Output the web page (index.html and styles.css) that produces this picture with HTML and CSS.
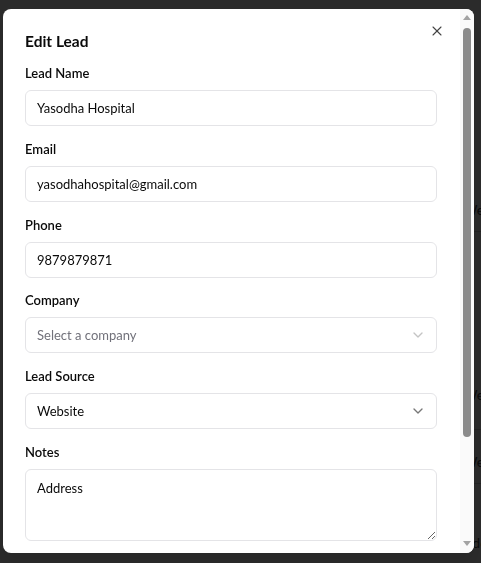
FILE: index.html
```html
<!DOCTYPE html>
<html lang="en">
<head>
<meta charset="utf-8">
<title>Edit Lead</title>
<link rel="stylesheet" href="styles.css">
</head>
<body>
  <div class="page">
    <div class="bg-table">
      <div class="bg-row r1"><span>Website</span></div>
      <div class="bg-row r2"><span>Website</span></div>
      <div class="bg-row r3"><span>Website</span></div>
      <div class="bg-row r4"><span>Added</span></div>
    </div>
    <p class="bg-foot">For more information, visit www.cuvama.co.in</p>
  </div>
  <div class="overlay"></div>

  <div class="modal" role="dialog" aria-labelledby="dlg-title">
    <div class="modal-body">
      <button class="close" type="button" aria-label="Close">
        <svg width="16" height="16" viewBox="0 0 24 24" fill="none" stroke="currentColor" stroke-width="2" stroke-linecap="round" stroke-linejoin="round"><path d="M18 6 6 18"/><path d="m6 6 12 12"/></svg>
      </button>
      <h2 class="title" id="dlg-title">Edit Lead</h2>
      <form class="form">
        <div class="field">
          <label class="label" for="f-name">Lead Name</label>
          <input class="input" id="f-name" type="text" value="Yasodha Hospital">
        </div>
        <div class="field">
          <label class="label" for="f-email">Email</label>
          <input class="input" id="f-email" type="text" value="yasodhahospital@gmail.com">
        </div>
        <div class="field">
          <label class="label" for="f-phone">Phone</label>
          <input class="input" id="f-phone" type="text" value="9879879871">
        </div>
        <div class="field">
          <label class="label">Company</label>
          <button class="select is-placeholder" type="button">
            <span>Select a company</span>
            <svg class="chev" width="16" height="16" viewBox="0 0 24 24" fill="none" stroke="currentColor" stroke-width="2" stroke-linecap="round" stroke-linejoin="round"><path d="m6 9 6 6 6-6"/></svg>
          </button>
        </div>
        <div class="field">
          <label class="label">Lead Source</label>
          <button class="select" type="button">
            <span>Website</span>
            <svg class="chev" width="16" height="16" viewBox="0 0 24 24" fill="none" stroke="currentColor" stroke-width="2" stroke-linecap="round" stroke-linejoin="round"><path d="m6 9 6 6 6-6"/></svg>
          </button>
        </div>
        <div class="field">
          <label class="label" for="f-notes">Notes</label>
          <textarea class="textarea" id="f-notes">Address</textarea>
        </div>
      </form>
    </div>
    <div class="scrollbar" aria-hidden="true">
      <span class="sb-btn"><span class="sb-arrow up"></span></span>
      <span class="sb-track"><span class="sb-thumb"></span></span>
      <span class="sb-btn"><span class="sb-arrow down"></span></span>
    </div>
  </div>
</body>
</html>
```
FILE: styles.css
```css
html, body {
  margin: 0;
  height: 100%;
}
body {
  font-family: Lato, "Liberation Sans", Arial, sans-serif;
  background: #ffffff;
  color: #0a0a0a;
  overflow: hidden;
}

/* background page (under the overlay) */
.page {
  height: 563px;
  display: flex;
  flex-direction: column;
}
.bg-table {
  margin-top: 168px;
  margin-left: 463px;
  display: flex;
  flex-direction: column;
}
.bg-row {
  display: flex;
  align-items: flex-start;
  box-sizing: border-box;
  border-bottom: 1px solid #d0d0d0;
  font-size: 14px;
  line-height: 20px;
  color: #444;
  white-space: nowrap;
}
.bg-row.r1 { height: 64px; padding-top: 32px; }
.bg-row.r2 { height: 198px; padding-top: 153px; }
.bg-row.r3 { height: 54px; padding-top: 22px; }
.bg-row.r4 { height: 80px; padding-top: 49px; border-bottom: 0; }
.bg-foot {
  margin: auto 0 -9px 238px;
  font-size: 14px;
  line-height: 18px;
  color: #555;
  white-space: nowrap;
}
.overlay {
  position: fixed;
  inset: 0;
  background: rgba(0, 0, 0, 0.83);
}

/* dialog */
.modal {
  position: fixed;
  left: 3px;
  top: 9px;
  width: 471px;
  height: 544px;
  display: flex;
  background: #ffffff;
  border-radius: 8px;
  overflow: hidden;
  box-shadow: 0 10px 15px rgba(0, 0, 0, 0.1);
}
.modal-body {
  position: relative;
  flex: 1;
  min-width: 0;
  padding: 20px 23px 0 22px;
  overflow: hidden;
}

.close {
  position: absolute;
  left: 426px;
  top: 13.5px;
  width: 16px;
  height: 16px;
  padding: 0;
  border: 0;
  background: none;
  color: #444;
  display: flex;
  cursor: pointer;
}
.close svg {
  stroke-width: 1.6;
}

.title {
  margin: 0 0 10px;
  font-size: 15.5px;
  line-height: 24px;
  font-weight: 700;
  color: #0a0a0a;
}

.form {
  display: flex;
  flex-direction: column;
  gap: 12.8px;
  margin: 0;
}
.field {
  display: flex;
  flex-direction: column;
}
.label {
  display: block;
  font-size: 13px;
  line-height: 20px;
  font-weight: 600;
  margin-bottom: 7px;
  color: #0a0a0a;
}
.input,
.select,
.textarea {
  box-sizing: border-box;
  width: 100%;
  border: 1px solid #e4e4e7;
  border-radius: 6px;
  background: #ffffff;
  font-family: inherit;
  font-size: 13px;
  color: #0a0a0a;
  margin: 0;
}
.input {
  height: 36px;
  padding: 0 11px;
  outline: none;
}
.select {
  height: 36px;
  padding: 0 10px 0 11px;
  display: flex;
  align-items: center;
  justify-content: space-between;
  text-align: left;
  cursor: pointer;
}
.select .chev {
  flex: none;
  color: #777;
}
.select.is-placeholder {
  color: #71717a;
}
.select.is-placeholder .chev {
  color: #c4c4c4;
}
.textarea {
  height: 72px;
  padding: 8px 11px;
  line-height: 20px;
  resize: vertical;
  outline: none;
  display: block;
}

/* drawn scrollbar of the dialog */
.scrollbar {
  flex: none;
  width: 14px;
  display: flex;
  flex-direction: column;
  background: #fafafa;
}
.sb-btn {
  flex: none;
  height: 16px;
  display: flex;
  align-items: center;
  justify-content: center;
}
.sb-arrow {
  width: 0;
  height: 0;
  border-left: 4.5px solid transparent;
  border-right: 4.5px solid transparent;
}
.sb-arrow.up {
  border-bottom: 5px solid #a3a3a3;
}
.sb-arrow.down {
  border-top: 5px solid #a3a3a3;
  margin-top: -3px;
}
.sb-track {
  flex: 1;
  display: flex;
  flex-direction: column;
  align-items: center;
  padding-top: 3px;
}
.sb-thumb {
  width: 8px;
  height: 409px;
  border-radius: 4px;
  background: #8b8b8b;
}
```
